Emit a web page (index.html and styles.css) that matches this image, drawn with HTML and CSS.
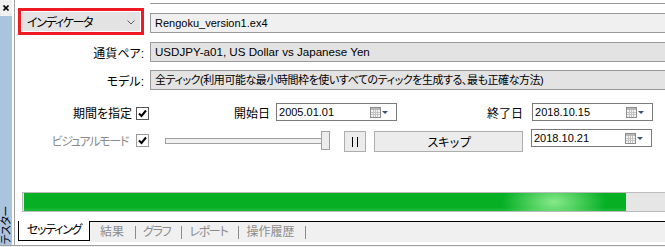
FILE: index.html
```html
<!DOCTYPE html>
<html lang="ja">
<head>
    <meta charset="UTF-8">
    <meta name="viewport" content="width=device-width, initial-scale=1.0">
    <title>テスター</title>
    <link rel="stylesheet" href="styles.css">
</head>
<body>

<div class="tester">

    <!-- Barra lateral del panel -->
    <aside class="side">
        <div class="side-head">
            <svg class="close" width="6" height="6" viewBox="0 0 6 6"><path d="M0.5 0.5 L5.5 5.5 M5.5 0.5 L0.5 5.5" stroke="#000" stroke-width="1.6"/></svg>
        </div>
        <div class="side-bar"><span class="side-title">テスター</span></div>
    </aside>

    <main class="panel">

        <!-- Tipo de programa y archivo -->
        <div class="line line-head">
            <div class="mark">
                <div class="combo">
                    <span class="kana">インディケータ</span>
                    <svg width="8" height="5" viewBox="0 0 8 5"><path d="M0.5 0.5 L4 4 L7.5 0.5" fill="none" stroke="#606060" stroke-width="1"/></svg>
                </div>
            </div>
            <div class="field-wrap">
                <div class="field field-light">Rengoku_version1.ex4</div>
            </div>
        </div>

        <div class="line line-pair">
            <label class="caption">通貨ペア:</label>
            <div class="field">USDJPY-a01, US Dollar vs Japanese Yen</div>
        </div>

        <div class="line line-model">
            <label class="caption">モデル:</label>
            <div class="field">全ティック(利用可能な最小時間枠を使いすべてのティックを生成する、最も正確な方法)</div>
        </div>

        <!-- Periodo -->
        <div class="row row-period">
            <span class="row-label">期間を指定</span>
            <span class="check">
                <svg width="11" height="11" viewBox="0 0 11 11"><path d="M2 5.5 L4.5 8 L9 2.5" fill="none" stroke="#000" stroke-width="2"/></svg>
            </span>
            <span class="date-label date-from">開始日</span>
            <div class="date">
                <span>2005.01.01</span>
                <svg class="cal" width="19" height="11" viewBox="0 0 19 11">
                    <rect x="0.5" y="0.5" width="10" height="10" fill="#f4f4f4" stroke="#8c8c8c"/>
                    <rect x="1" y="1" width="9" height="2" fill="#b8b8b8"/>
                    <path d="M1 5.5 H10 M1 7.5 H10 M3.5 3 V10 M5.5 3 V10 M7.5 3 V10" stroke="#c4c4c4" stroke-width="1"/>
                    <path d="M12 4 H18 L15 7 Z" fill="#34558a"/>
                </svg>
            </div>
            <span class="date-label date-to">終了日</span>
            <div class="date">
                <span>2018.10.15</span>
                <svg class="cal" width="19" height="11" viewBox="0 0 19 11">
                    <rect x="0.5" y="0.5" width="10" height="10" fill="#f4f4f4" stroke="#8c8c8c"/>
                    <rect x="1" y="1" width="9" height="2" fill="#b8b8b8"/>
                    <path d="M1 5.5 H10 M1 7.5 H10 M3.5 3 V10 M5.5 3 V10 M7.5 3 V10" stroke="#c4c4c4" stroke-width="1"/>
                    <path d="M12 4 H18 L15 7 Z" fill="#34558a"/>
                </svg>
            </div>
        </div>

        <!-- Modo visual -->
        <div class="row row-visual">
            <span class="row-label muted kana">ビジュアルモード</span>
            <span class="check check-muted">
                <svg width="11" height="11" viewBox="0 0 11 11"><path d="M2 5.5 L4.5 8 L9 2.5" fill="none" stroke="#000" stroke-width="2"/></svg>
            </span>
            <div class="slider">
                <div class="track"></div>
                <div class="thumb"></div>
            </div>
            <button class="btn btn-pause"><span class="bars"></span></button>
            <button class="btn btn-skip kana">スキップ</button>
            <div class="date date-skip">
                <span>2018.10.21</span>
                <svg class="cal" width="19" height="11" viewBox="0 0 19 11">
                    <rect x="0.5" y="0.5" width="10" height="10" fill="#f4f4f4" stroke="#8c8c8c"/>
                    <rect x="1" y="1" width="9" height="2" fill="#b8b8b8"/>
                    <path d="M1 5.5 H10 M1 7.5 H10 M3.5 3 V10 M5.5 3 V10 M7.5 3 V10" stroke="#c4c4c4" stroke-width="1"/>
                    <path d="M12 4 H18 L15 7 Z" fill="#34558a"/>
                </svg>
            </div>
        </div>

        <!-- Progreso -->
        <div class="progress">
            <div class="progress-bar" style="width: 602px"></div>
        </div>

        <!-- Pestañas -->
        <nav class="tabs">
            <span class="tab-active kana">セッティング</span>
            <div class="tab-rest">
                <span class="tab">結果</span>
                <span class="tab kana">グラフ</span>
                <span class="tab kana">レポート</span>
                <span class="tab">操作履歴</span>
            </div>
        </nav>

    </main>
</div>

</body>
</html>
```

FILE: styles.css
```css
/* Base */
* {
    box-sizing: border-box;
}
body {
    margin: 0;
    width: 665px;
    height: 247px;
    overflow: hidden;
    background-color: #f0f0f0;
    font-family: "Liberation Sans", "Noto Sans CJK JP", sans-serif;
    font-size: 12px;
    font-feature-settings: "palt";
    color: #000;
}
.tester {
    display: flex;
    height: 246px;
    background-color: #fff;
    border-bottom: 1px solid #a0a0a0;
}
.kana {
    letter-spacing: -1.3px;
}

/* Barra lateral */
.side {
    width: 15px;
    display: flex;
    flex-direction: column;
    padding-right: 2px;
    border-right: 1px solid #a0a0a0;
}
.side-head {
    height: 16px;
    background-color: #f0f0f0;
    padding: 5px 0 0 3px;
}
.close {
    display: block;
}
.side-bar {
    flex: 1;
    background-color: #aac3df;
    display: flex;
    align-items: flex-end;
    justify-content: center;
}
.side-title {
    writing-mode: vertical-rl;
    text-orientation: sideways;
    transform: rotate(180deg);
    font-size: 11px;
    line-height: 12px;
    letter-spacing: -0.5px;
    padding-top: 1px;
}

/* Panel principal */
.panel {
    flex: 1;
    padding: 8px 0 0 3px;
    min-width: 0;
}
.line {
    display: flex;
    align-items: center;
    column-gap: 6px;
}
.line-head {
    height: 27px;
    align-items: flex-start;
}
.line-pair {
    margin-top: 7px;
    height: 20px;
}
.line-model {
    margin-top: 8px;
    height: 20px;
}
.mark {
    width: 126px;
    height: 27px;
    border: 3px solid #ed1c24;
    padding: 1px;
    background-color: #fff;
}
.combo {
    height: 100%;
    background-color: #e3e3e3;
    display: flex;
    align-items: center;
    justify-content: space-between;
    padding: 0 5px 0 5px;
}
.combo svg {
    margin-top: 1px;
}
.field-wrap {
    flex: 1;
    margin-top: -5px;
    padding-top: 9px;
    border-top: 1px solid #999;
}
.field {
    flex: 1;
    height: 20px;
    line-height: 18px;
    padding-left: 4px;
    border: 1px solid #999;
    border-right: none;
    background-color: #e3e3e3;
    white-space: nowrap;
    overflow: hidden;
    font-size: 11.6px;
}
.line-model .field {
    font-size: 11px;
    letter-spacing: -0.45px;
}
.field-light {
    background-color: #f0f0f0;
    font-size: 11px;
}
.caption {
    width: 126px;
    text-align: right;
}

/* Filas de fechas */
.row {
    display: flex;
    align-items: center;
}
.row-period {
    margin-top: 13px;
    height: 18px;
}
.row-visual {
    margin-top: 8px;
    height: 23px;
}
.row-label {
    width: 114px;
    flex-shrink: 0;
    text-align: right;
    white-space: nowrap;
}
.muted {
    color: #8c8c8c;
    padding-right: 4px;
}
.check {
    width: 13px;
    height: 13px;
    flex-shrink: 0;
    margin-left: 4px;
    border: 1px solid #555;
    background-color: #fff;
    display: flex;
    align-items: center;
    justify-content: center;
}
.row-period .check {
    margin-top: 2px;
}
.check-muted {
    border-color: #9a9a9a;
    margin-top: -1px;
}
.date-label {
    white-space: nowrap;
    flex-shrink: 0;
}
.date-from {
    margin-left: 85px;
}
.date-to {
    margin-left: 90px;
}
.date {
    width: 121px;
    height: 18px;
    flex-shrink: 0;
    margin-left: 6px;
    border: 1px solid #7a7a7a;
    background-color: #fff;
    display: flex;
    align-items: center;
    justify-content: space-between;
    padding: 0 7px 0 2px;
    font-size: 11px;
}
.date-to + .date {
    margin-left: 9px;
}
.date-skip {
    margin-left: 8px;
    align-self: flex-start;
}
.cal {
    display: block;
}

/* Control de velocidad */
.slider {
    width: 165px;
    margin-left: 16px;
    display: flex;
    align-items: center;
}
.track {
    flex: 1;
    height: 6px;
    border: 1px solid #a0a0a0;
    background-color: #f2f2f2;
}
.thumb {
    width: 9px;
    height: 19px;
    margin-left: -5px;
    border: 1px solid #a0a0a0;
    background-color: #ececec;
}
.btn {
    height: 21px;
    margin-top: 2px;
    border: 1px solid #adadad;
    background-color: #ececec;
    font-family: inherit;
    font-size: 12px;
    color: #000;
    padding: 0;
}
.btn-pause {
    width: 22px;
    margin-left: 14px;
    display: flex;
    align-items: center;
    justify-content: center;
}
.bars {
    width: 6px;
    height: 10px;
    border-left: 1px solid #000;
    border-right: 1px solid #000;
}
.btn-skip {
    width: 149px;
    margin-left: 8px;
}

/* Barra de progreso */
.progress {
    margin: 40px 0 0 4px;
    height: 20px;
    border: 1px solid #bcbcbc;
    border-right: none;
    background-color: #e6e6e6;
    padding-left: 1px;
}
.progress-bar {
    height: 100%;
    background:
        radial-gradient(ellipse 52px 26px at 530px 50%, rgba(150, 240, 150, 0.9), rgba(6, 176, 37, 0) 100%),
        linear-gradient(180deg, #06b025 0, #06b025 80%, #20bb3c 100%);
}

/* Pestañas */
.tabs {
    margin-top: 9px;
    display: flex;
    height: 21px;
}
.tab-active {
    width: 72px;
    height: 20px;
    border: 1px solid #000;
    border-top: none;
    background-color: #fff;
    text-align: center;
    line-height: 19px;
}
.tab-rest {
    flex: 1;
    border-top: 1px solid #000;
    background-color: #f0f0f0;
    display: flex;
    align-items: center;
    padding-left: 3px;
}
.tab {
    color: #8c8c8c;
    padding: 0 11px 0 7px;
    border-right: 1px solid #8c8c8c;
    line-height: 13px;
}
```
